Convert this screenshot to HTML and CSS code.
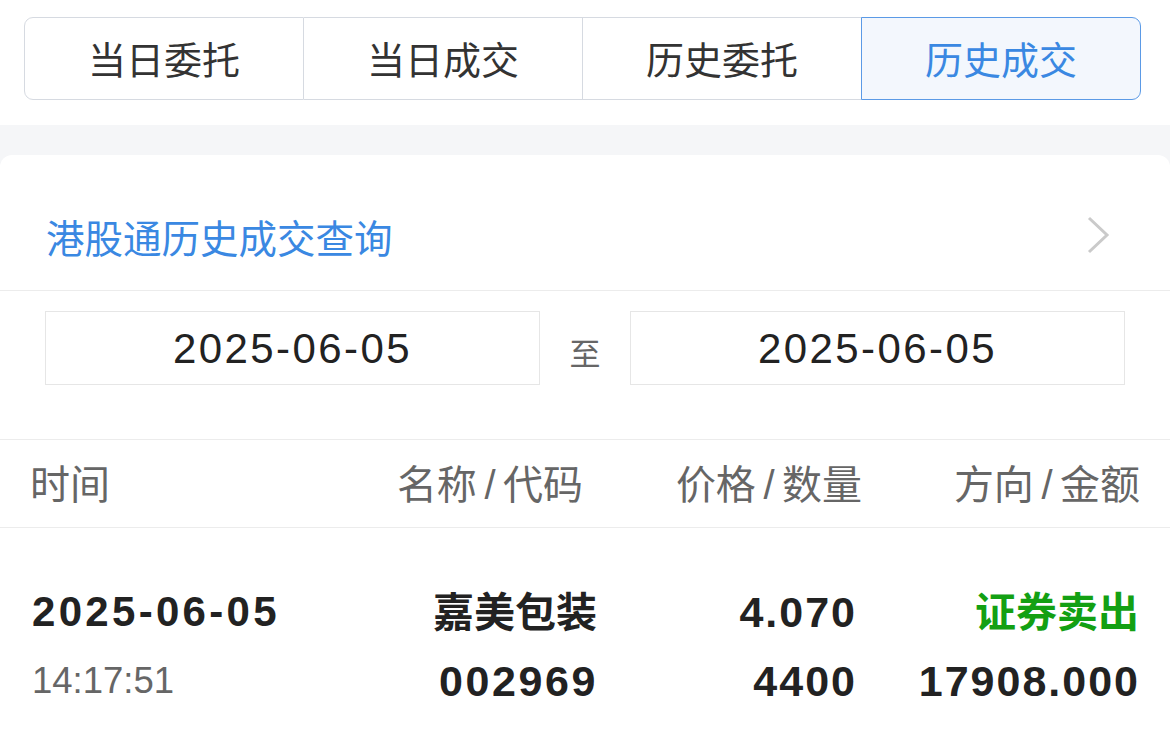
FILE: index.html
```html
<!DOCTYPE html>
<html lang="zh-CN">
<head>
<meta charset="utf-8">
<title>港股通历史成交查询</title>
<link rel="stylesheet" href="styles.css">
</head>
<body>
<div class="page">
  <div class="tabs-wrap">
    <div class="tabs">
      <div class="tab">当日委托</div>
      <div class="tab">当日成交</div>
      <div class="tab">历史委托</div>
      <div class="tab active">历史成交</div>
    </div>
  </div>
  <div class="band">
    <div class="card">
      <div class="title-row">
        <span class="title">港股通历史成交查询</span>
        <svg class="chev" width="24" height="38" viewBox="0 0 24 38"><polyline points="3,2 21,19 3,36" fill="none" stroke="#cacaca" stroke-width="3"/></svg>
      </div>
      <div class="date-row">
        <div class="date-box">2025-06-05</div>
        <div class="to">至</div>
        <div class="date-box">2025-06-05</div>
      </div>
      <div class="table-head">
        <div class="c1">时间</div>
        <div class="c2 h2">名称<span class="sl">/</span>代码</div>
        <div class="c3 h3">价格<span class="sl">/</span>数量</div>
        <div class="c4 h4">方向<span class="sl">/</span>金额</div>
      </div>
      <div class="table-row">
        <div class="c1">
          <div class="l1 num date">2025-06-05</div>
          <div class="l2 time">14:17:51</div>
        </div>
        <div class="c2">
          <div class="l1 cjk">嘉美包装</div>
          <div class="l2 num code">002969</div>
        </div>
        <div class="c3 d3">
          <div class="l1 num">4.070</div>
          <div class="l2 num">4400</div>
        </div>
        <div class="c4 d4">
          <div class="l1 cjk sell">证券卖出</div>
          <div class="l2 num">17908.000</div>
        </div>
      </div>
    </div>
  </div>
</div>
</body>
</html>
```

FILE: styles.css
```css
html, body {
  margin: 0;
  padding: 0;
  background: #ffffff;
}
body {
  font-family: "Liberation Sans", "Noto Sans CJK SC", sans-serif;
  color: #222222;
  width: 1170px;
  height: 731px;
  overflow: hidden;
}
.page {
  display: flex;
  flex-direction: column;
}
.tabs-wrap {
  padding: 17px 29px 25px 24px;
  background: #ffffff;
}
.tabs {
  display: flex;
  height: 83px;
}
.tab {
  flex: 1;
  display: flex;
  align-items: center;
  justify-content: center;
  font-family: "Noto Sans CJK SC", sans-serif;
  font-size: 38px;
  color: #333333;
  border: 1px solid #d6dae1;
  border-left: none;
  padding-bottom: 2px;
}
.tab:first-child {
  border-left: 1px solid #d6dae1;
  border-radius: 9px 0 0 9px;
}
.tab.active {
  color: #3a88e2;
  background: #f3f7fd;
  border: 1px solid #5b9ae6;
  margin-left: -1px;
  border-radius: 0 9px 9px 0;
}
.band {
  background: #f5f6f8;
  padding-top: 30px;
}
.card {
  background: #ffffff;
  border-radius: 12px 12px 0 0;
  display: flex;
  flex-direction: column;
}
.title-row {
  display: flex;
  align-items: center;
  justify-content: space-between;
  padding: 58px 60px 31px 46px;
  border-bottom: 1px solid #ececec;
}
.title {
  font-family: "Noto Sans CJK SC", sans-serif;
  font-size: 38.5px;
  line-height: 46px;
  color: #3a88e2;
}
.chev {
  display: block;
  margin-top: -3px;
}
.date-row {
  display: flex;
  align-items: center;
  padding: 20px 45px 54px 45px;
  border-bottom: 1px solid #ececec;
}
.date-box {
  flex: 1;
  height: 74px;
  box-sizing: border-box;
  border: 1px solid #e6e6e6;
  display: flex;
  align-items: center;
  justify-content: center;
  font-size: 42px;
  letter-spacing: 2.4px;
  color: #222222;
  padding-top: 1px;
}
.to {
  width: 90px;
  text-align: center;
  font-family: "Noto Sans CJK SC", sans-serif;
  font-size: 31px;
  color: #666666;
  padding-top: 6px;
}
.table-head,
.table-row {
  display: grid;
  grid-template-columns: 270px 298px 264px 278px;
  padding: 0 30px;
}
.table-head {
  height: 88px;
  align-items: center;
  border-bottom: 1px solid #ececec;
  font-family: "Noto Sans CJK SC", sans-serif;
  font-size: 40px;
  color: #666666;
  padding-bottom: 4px;
  box-sizing: border-box;
}
.sl {
  font-family: "Liberation Sans", sans-serif;
  margin: 0 7.5px;
}
.c2, .c3, .c4 {
  text-align: right;
}
.h2 { padding-right: 15px; }
.h3 { padding-right: 0; }
.h4 { padding-right: 0; }
.d3 { padding-right: 5px; }
.d4 { padding-right: 0; }
.table-row {
  padding-top: 64px;
}
.table-row .c1 {
  padding-left: 2px;
}
.l1 {
  height: 40px;
  line-height: 40px;
}
.l2 {
  margin-top: 29px;
  height: 40px;
  line-height: 40px;
}
.num {
  font-family: "Liberation Sans", sans-serif;
  font-weight: bold;
  font-size: 43px;
  letter-spacing: 2px;
  color: #222222;
}
.code {
  letter-spacing: 2.6px;
}
.date {
  font-size: 42px;
  letter-spacing: 3.3px;
}
.time {
  font-family: "Liberation Sans", sans-serif;
  font-size: 36.5px;
  color: #666666;
  font-weight: normal;
}
.cjk {
  font-family: "Noto Sans CJK SC", sans-serif;
  font-size: 41px;
  line-height: 34px;
  font-weight: bold;
  padding-right: 1px;
}
.sell {
  color: #13a013;
}
```
